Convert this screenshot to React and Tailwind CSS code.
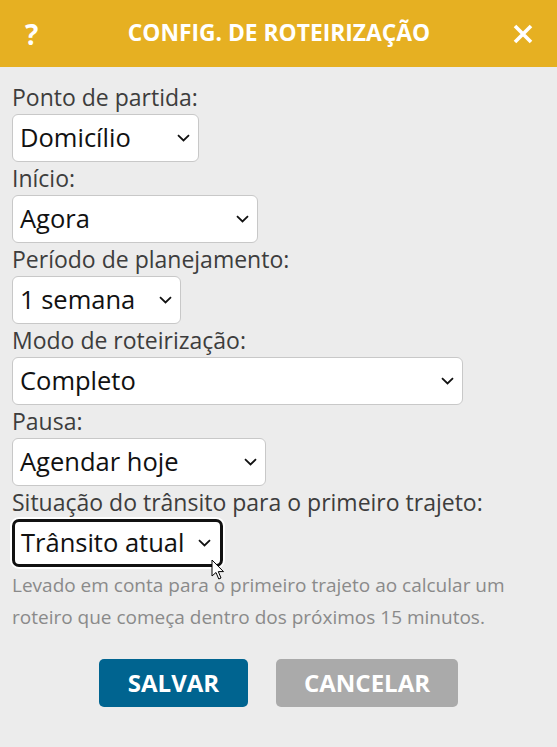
import React from "react";

const Chevron = () => (
  <svg width="13" height="8" viewBox="0 0 13 8" className="shrink-0">
    <path d="M1 1.2 L6.5 6.5 L12 1.2" fill="none" stroke="#111" strokeWidth="1.8" />
  </svg>
);

function Select({ value, width, focused }) {
  return (
    <div
      className={
        "flex items-center justify-between bg-white h-[48px] " +
        (focused
          ? "border-[3px] border-[#111] rounded-[7px] ring-2 ring-white pl-[6px] pr-[9px]"
          : "border border-[#c8c8c8] rounded-[6px] pl-[7px] pr-[8px]")
      }
      style={{ width }}
    >
      <span className="text-[25.5px] text-[#111] leading-none">{value}</span>
      <Chevron />
    </div>
  );
}

function Field({ label, value, width, focused }) {
  return (
    <div className="flex flex-col">
      <div className="text-[23px] leading-[33px] text-[#3d3d3d] whitespace-nowrap">{label}</div>
      <Select value={value} width={width} focused={focused} />
    </div>
  );
}

export default function App() {
  return (
    <div
      className="w-[557px] h-[747px] bg-[#ececec] flex flex-col relative overflow-hidden"
      style={{ fontFamily: '"Open Sans", "Noto Sans", sans-serif' }}
    >
      <div className="h-[67px] bg-[#e6b022] flex items-center justify-between pl-[25px] pr-[24px] shrink-0">
        <span className="text-white font-bold text-[28px] leading-none w-[20px]">?</span>
        <span className="text-white font-bold text-[22.8px] leading-none">CONFIG. DE ROTEIRIZAÇÃO</span>
        <svg width="20" height="20" viewBox="0 0 20 20">
          <path d="M2 2 L18 18 M18 2 L2 18" stroke="white" strokeWidth="3.6" />
        </svg>
      </div>
      <div className="flex flex-col px-[12px] pt-[14px]">
        <Field label="Ponto de partida:" value="Domicílio" width={187} />
        <Field label="Início:" value="Agora" width={246} />
        <Field label="Período de planejamento:" value="1 semana" width={169} />
        <Field label="Modo de roteirização:" value="Completo" width={451} />
        <Field label="Pausa:" value="Agendar hoje" width={254} />
        <Field label="Situação do trânsito para o primeiro trajeto:" value="Trânsito atual" width={211} focused />
        <p className="text-[19px] leading-[32px] text-[#8a8a8a] mt-[2px]">
          Levado em conta para o primeiro trajeto ao calcular um roteiro que começa dentro dos próximos 15 minutos.
        </p>
        <div className="flex justify-center gap-[28px] mt-[26px]">
          <button className="h-[48px] w-[149px] rounded-[5px] bg-[#006490] text-white font-bold text-[24px]">
            SALVAR
          </button>
          <button className="h-[48px] w-[182px] rounded-[5px] bg-[#aaaaaa] text-white font-bold text-[24px]">
            CANCELAR
          </button>
        </div>
      </div>
      <svg width="14" height="22" viewBox="0 0 14 22" className="absolute left-[211px] top-[559px]">
        <path d="M1 1 L1 17 L5 13.5 L7.8 20 L10 19 L7.3 12.6 L12.5 12.6 Z" fill="white" stroke="black" strokeWidth="1" />
      </svg>
    </div>
  );
}
